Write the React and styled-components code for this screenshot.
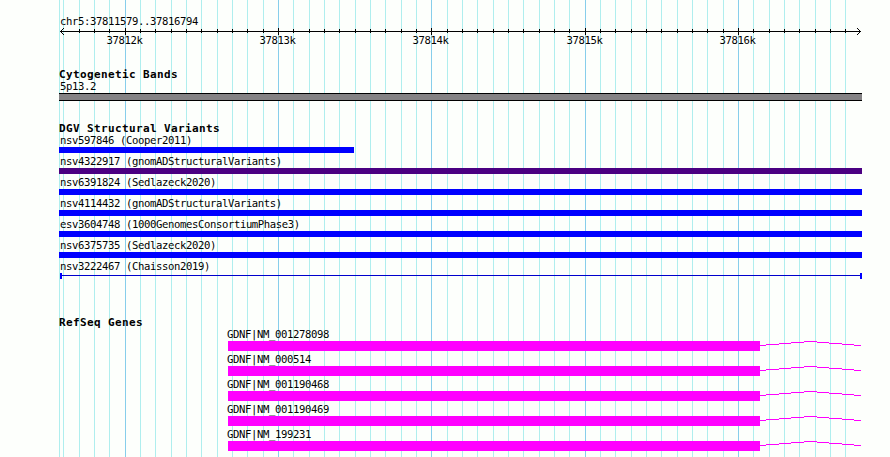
import styled, { createGlobalStyle } from "styled-components";

const GlobalStyle = createGlobalStyle`
  body {
    margin: 0;
    background: #fdfffc;
    overflow: hidden;
  }
`;

const Browser = styled.main`
  position: relative;
  box-sizing: border-box;
  width: 890px;
  height: 457px;
  padding: 15px 28px 0 59px;
  overflow: hidden;
  color: #000;
  font-family: "DejaVu Sans Mono", "Liberation Mono", monospace;
`;

//grid lines run behind all of the tracks
const GridLines = styled.svg`
  position: absolute;
  inset: 0;
  z-index: -1;
`;

const Label = styled.div`
  height: 12px;
  padding-left: ${(props) => props.$indent ?? 1}px;
  font-size: 10.6px;
  line-height: 12px;
  letter-spacing: -0.382px;
  white-space: pre;
`;

const Ruler = styled.svg`
  display: block;
  overflow: visible;

  text {
    font-size: 10.6px;
    letter-spacing: -0.382px;
  }
`;

const Track = styled.section`
  margin-top: ${(props) => props.$gap}px;
`;

const TrackTitle = styled.h2`
  height: 13px;
  margin: 0;
  font-size: 11px;
  font-weight: 700;
  line-height: 15px;
  letter-spacing: 0.378px;
  white-space: pre;
`;

const Band = styled.div`
  box-sizing: border-box;
  height: 8px;
  margin-top: 1px;
  border: solid #000;
  border-width: 1px 0;
  background: #848284;
`;

const Feature = styled.div`
  margin-bottom: 2px;
`;

const Bar = styled.div`
  width: ${(props) => props.$width}px;
  height: 6px;
  margin-top: 1px;
  background: ${(props) => props.$color};
`;

const Span = styled.div`
  display: flex;
  align-items: flex-start;
  box-sizing: border-box;
  height: 6px;
  margin: 1px 0 0 1px;
  border: solid #0000ff;
  border-width: 0 2px;

  &::before {
    content: "";
    flex: 1;
    height: 1px;
    margin-top: 2px;
    background: #0000cd;
  }
`;

const Gene = styled.div`
  display: flex;
  height: 10px;
  margin: 1px 0 0 169px;
`;

const Exon = styled.div`
  width: 532px;
  background: #ff00ff;
`;

const majorLines = [125, 278, 431, 585, 738];
const minorLines = [
  59, 63, 79, 94, 109, 140, 155, 171, 186, 201, 217, 232, 247, 263, 293, 309,
  324, 339, 355, 370, 385, 401, 416, 447, 462, 477, 493, 508, 523, 539, 554,
  569, 600, 615, 631, 646, 661, 677, 692, 707, 723, 753, 769, 784, 799, 815,
  830, 845,
];

const variants = [
  { name: "nsv597846 (Cooper2011)", width: 295, color: "#0000ff" },
  {
    name: "nsv4322917 (gnomADStructuralVariants)",
    width: 803,
    color: "#4b0082",
  },
  { name: "nsv6391824 (Sedlazeck2020)", width: 803, color: "#0000ff" },
  {
    name: "nsv4114432 (gnomADStructuralVariants)",
    width: 803,
    color: "#0000ff",
  },
  {
    name: "esv3604748 (1000GenomesConsortiumPhase3)",
    width: 803,
    color: "#0000ff",
  },
  { name: "nsv6375735 (Sedlazeck2020)", width: 803, color: "#0000ff" },
  { name: "nsv3222467 (Chaisson2019)" },
];

const genes = [
  "GDNF|NM_001278098",
  "GDNF|NM_000514",
  "GDNF|NM_001190468",
  "GDNF|NM_001190469",
  "GDNF|NM_199231",
];

function Grid() {
  return (
    <GridLines width="890" height="457" shapeRendering="crispEdges">
      {minorLines.map((x) => (
        <rect key={x} x={x} width="1" height="457" fill="#afeeee" />
      ))}
      {majorLines.map((x) => (
        <rect key={x} x={x} width="1" height="457" fill="#87ceeb" />
      ))}
    </GridLines>
  );
}

function Scale() {
  return (
    <Ruler width="803" height="20" viewBox="59 27 803 20">
      <g shapeRendering="crispEdges">
        <rect x="60" y="31" width="801" height="1" />
        {minorLines.slice(2).map((x) => (
          <rect key={x} x={x} y="29" width="1" height="4" />
        ))}
        {majorLines.map((x) => (
          <rect key={x} x={x} y="28" width="1" height="7" />
        ))}
        {[1, 2, 3].map((d) => (
          <g key={d}>
            <rect x={60 + d} y={31 - d} width="1" height="1" />
            <rect x={60 + d} y={31 + d} width="1" height="1" />
            <rect x={860 - d} y={31 - d} width="1" height="1" />
            <rect x={860 - d} y={31 + d} width="1" height="1" />
          </g>
        ))}
      </g>
      {majorLines.map((x, i) => (
        <text key={x} x={x - 18.5} y="44">
          {37812 + i}k
        </text>
      ))}
    </Ruler>
  );
}

function Intron() {
  return (
    <svg width="101" height="10" shapeRendering="crispEdges">
      <path
        d="M0 4.5H6M6 3.5H19M19 2.5H31M31 1.5H44M44 .5H57M57 1.5H69M69 2.5H82M82 3.5H94M94 4.5H101"
        stroke="#ff00ff"
      />
    </svg>
  );
}

function App() {
  return (
    <>
      <GlobalStyle />
      <Browser>
        <Grid />
        <Label>chr5:37811579..37816794</Label>
        <Scale />

        <Track $gap={20}>
          <TrackTitle>Cytogenetic Bands</TrackTitle>
          <Label>5p13.2</Label>
          <Band />
        </Track>

        <Track $gap={20}>
          <TrackTitle>DGV Structural Variants</TrackTitle>
          {variants.map(({ name, width, color }) => (
            <Feature key={name}>
              <Label>{name}</Label>
              {width ? <Bar $width={width} $color={color} /> : <Span />}
            </Feature>
          ))}
        </Track>

        <Track $gap={36}>
          <TrackTitle>RefSeq Genes</TrackTitle>
          {genes.map((name) => (
            <Feature key={name}>
              <Label $indent={168}>{name}</Label>
              <Gene>
                <Exon />
                <Intron />
              </Gene>
            </Feature>
          ))}
        </Track>
      </Browser>
    </>
  );
}

export default App;
